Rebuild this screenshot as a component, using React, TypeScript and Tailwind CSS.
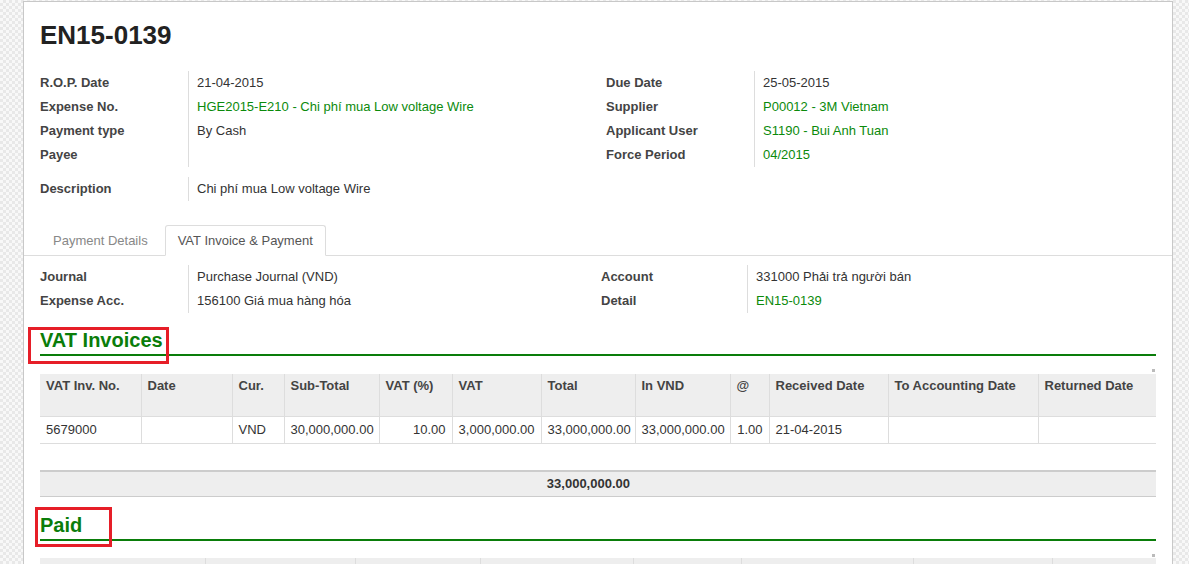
import clsx from 'clsx';

type Row = { label: string; value?: string; link?: boolean };

type Col = { title: string; w: string; right?: boolean };

const topLeft: Row[] = [
  { label: 'R.O.P. Date', value: '21-04-2015' },
  { label: 'Expense No.', value: 'HGE2015-E210 - Chi phí mua Low voltage Wire', link: true },
  { label: 'Payment type', value: 'By Cash' },
  { label: 'Payee', value: '' },
];

const topRight: Row[] = [
  { label: 'Due Date', value: '25-05-2015' },
  { label: 'Supplier', value: 'P00012 - 3M Vietnam', link: true },
  { label: 'Applicant User', value: 'S1190 - Bui Anh Tuan', link: true },
  { label: 'Force Period', value: '04/2015', link: true },
];

const vatCols: Col[] = [
  { title: 'VAT Inv. No.', w: 'w-[101px]' },
  { title: 'Date', w: 'w-[91px]' },
  { title: 'Cur.', w: 'w-[52px]' },
  { title: 'Sub-Total', w: 'w-[95px]', right: true },
  { title: 'VAT (%)', w: 'w-[73px]', right: true },
  { title: 'VAT', w: 'w-[89px]', right: true },
  { title: 'Total', w: 'w-[94px]', right: true },
  { title: 'In VND', w: 'w-[95px]', right: true },
  { title: '@', w: 'w-[39px]', right: true },
  { title: 'Received Date', w: 'w-[119px]' },
  { title: 'To Accounting Date', w: 'w-[150px]' },
  { title: 'Returned Date', w: 'w-[118px]' },
];

const vatRow = [
  '5679000',
  '',
  'VND',
  '30,000,000.00',
  '10.00',
  '3,000,000.00',
  '33,000,000.00',
  '33,000,000.00',
  '1.00',
  '21-04-2015',
  '',
  '',
];

const paidCols = ['w-[165px]', 'w-[150px]', 'w-[125px]', 'w-[153px]', 'w-[108px]', 'w-[172px]', 'w-[139px]', 'w-[104px]'];

function FieldGroup({ rows, labelWidth }: { rows: Row[]; labelWidth: string }) {
  return (
    <div className="flex flex-col">
      {rows.map((r) => (
        <div key={r.label} className="flex h-6 items-center">
          <div className={clsx(labelWidth, 'shrink-0 font-bold text-[#444]')}>{r.label}</div>
          <div
            className={clsx(
              'flex h-full flex-1 items-center border-l border-[#ddd] pl-2',
              r.link ? 'text-[#0b8a0b]' : 'text-[#333]'
            )}
          >
            {r.value}
          </div>
        </div>
      ))}
    </div>
  );
}

function SectionTitle({ children, box }: { children: string; box: string }) {
  return (
    <div className="relative">
      <h2 className="border-b-2 border-[#0a7d0a] pb-[2px] text-[20px] leading-6 font-bold text-[#0a7d0a]">
        {children}
      </h2>
      <span className={clsx('pointer-events-none absolute border-[3px] border-[#e61e28]', box)} />
    </div>
  );
}

function ResizeDot() {
  return (
    <div className="flex justify-end pr-[1px]">
      <span className="h-[3px] w-[3px] bg-[#bbb]" />
    </div>
  );
}

export default function App() {
  return (
    <div className="min-h-screen bg-[#f3f3f3] bg-[image:repeating-conic-gradient(#e8e8e8_0%_25%,#f8f8f8_0%_50%)] bg-[length:6px_6px] pt-[1px] pr-4 pl-[23px] font-['Liberation_Sans',Arial,sans-serif] text-[13px] text-[#333]">
      <div className="border border-[#c8c8c8] bg-white px-4 pt-[18px] pb-10">
        <h1 className="text-[26px] leading-[31px] font-bold text-[#222]">EN15-0139</h1>

        <div className="mt-[20px] flex">
          <div className="w-[566px]">
            <FieldGroup rows={topLeft} labelWidth="w-[148px]" />
          </div>
          <div className="flex-1">
            <FieldGroup rows={topRight} labelWidth="w-[148px]" />
          </div>
        </div>

        <div className="mt-[10px] w-[566px]">
          <FieldGroup rows={[{ label: 'Description', value: 'Chi phí mua Low voltage Wire' }]} labelWidth="w-[148px]" />
        </div>

        <nav className="-mx-4 mt-[24px] flex items-end border-b border-[#ddd] px-4">
          <button
            type="button"
            className="-mb-px mr-1 h-[31px] border border-transparent px-3 text-[13px] text-[#888]"
          >
            Payment Details
          </button>
          <button
            type="button"
            className="-mb-px h-[31px] rounded-t-[3px] border border-[#ddd] border-b-white bg-white px-3 text-[13px] text-[#555]"
          >
            VAT Invoice &amp; Payment
          </button>
        </nav>

        <div className="mt-[9px] flex">
          <div className="w-[561px]">
            <FieldGroup
              rows={[
                { label: 'Journal', value: 'Purchase Journal (VND)' },
                { label: 'Expense Acc.', value: '156100 Giá mua hàng hóa' },
              ]}
              labelWidth="w-[148px]"
            />
          </div>
          <div className="flex-1">
            <FieldGroup
              rows={[
                { label: 'Account', value: '331000 Phải trả người bán' },
                { label: 'Detail', value: 'EN15-0139', link: true },
              ]}
              labelWidth="w-[146px]"
            />
          </div>
        </div>

        <div className="mt-[15px]">
          <SectionTitle box="-top-[1px] -left-[12px] h-[37px] w-[141px]">VAT Invoices</SectionTitle>
        </div>

        <div className="mt-[13px]">
          <ResizeDot />
        </div>

        <table className="mt-[2px] w-full table-fixed border-collapse">
          <thead>
            <tr className="bg-[#eee]">
              {vatCols.map((c) => (
                <th
                  key={c.title}
                  className={clsx(
                    c.w,
                    'h-[42px] border-r border-b border-[#ddd] px-[6px] pt-1 text-left align-top leading-4 font-bold whitespace-nowrap text-[#444] last:border-r-0'
                  )}
                >
                  {c.title}
                </th>
              ))}
            </tr>
          </thead>
          <tbody>
            <tr>
              {vatRow.map((v, i) => (
                <td
                  key={i}
                  className={clsx(
                    'h-[27px] border-r border-b border-[#ddd] px-[6px] whitespace-nowrap last:border-r-0',
                    vatCols[i].right ? 'text-right' : 'text-left'
                  )}
                >
                  {v}
                </td>
              ))}
            </tr>
          </tbody>
        </table>

        <div className="mt-[26px] border-t-2 border-b border-[#ccc] bg-[#eee]">
          <table className="w-full table-fixed">
            <tbody>
              <tr>
                {vatCols.map((c, i) => (
                  <td key={c.title} className={clsx(c.w, 'h-6 pr-[5px] text-right font-bold text-[#333]')}>
                    {i === 6 ? '33,000,000.00' : ''}
                  </td>
                ))}
              </tr>
            </tbody>
          </table>
        </div>

        <div className="mt-[16px]">
          <SectionTitle box="-top-[6px] -left-[5px] h-[40px] w-[77px]">Paid</SectionTitle>
        </div>

        <div className="mt-[13px]">
          <ResizeDot />
        </div>

        <table className="mt-[1px] w-full table-fixed border-collapse">
          <thead>
            <tr className="bg-[#eee]">
              {paidCols.map((w) => (
                <th key={w} className={clsx(w, 'h-[42px] border-r border-b border-[#ddd] last:border-r-0')} />
              ))}
            </tr>
          </thead>
        </table>
      </div>
    </div>
  );
}
